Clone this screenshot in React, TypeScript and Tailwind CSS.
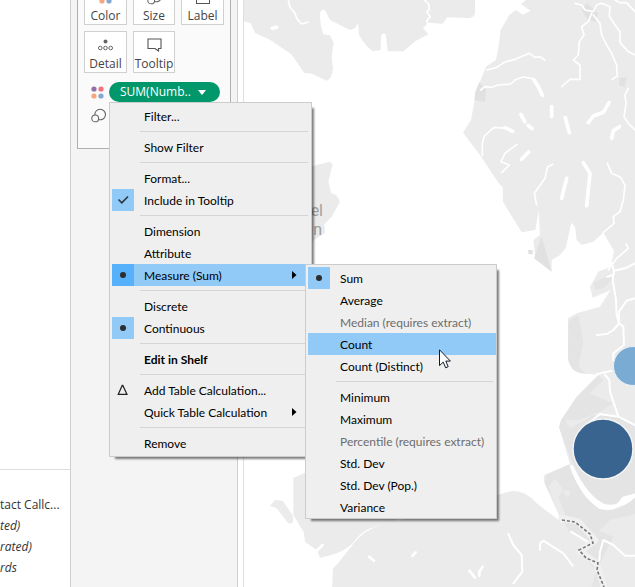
import type { ReactNode } from "react";

type Mark = "check" | "dot" | "delta";

type Entry = {
  label: string;
  mark?: Mark;
  bold?: boolean;
  disabled?: boolean;
  active?: boolean;
  submenu?: ReactNode;
  arrow?: boolean;
};

function MarkIcon({ mark }: { mark: Mark }) {
  if (mark === "check") {
    return (
      <svg viewBox="0 0 22 22" className="size-[22px]" fill="none" stroke="#2b3640" strokeWidth="1.6">
        <path d="M6.5 10.5 L9.8 13.8 L16 7.5" />
      </svg>
    );
  }
  if (mark === "dot") {
    return (
      <svg viewBox="0 0 22 22" className="size-[22px]">
        <circle cx="11" cy="11" r="3" fill="#2d2d2d" />
      </svg>
    );
  }
  return (
    <svg viewBox="0 0 22 22" className="size-[22px]" fill="none" stroke="#222" strokeWidth="1.2">
      <path d="M6.2 15.4 L10.2 6.4 H10.8 L15 15.4 Z" />
    </svg>
  );
}

function MenuItem({ label, mark, bold, disabled, active, submenu, arrow }: Entry) {
  const markBg = !mark || mark === "delta" ? "" : active && arrow ? "bg-[#56b0fa]" : "bg-[#91c9f7]";
  return (
    <li role="none" className="relative">
      <button
        type="button"
        role="menuitem"
        disabled={disabled}
        className={`flex h-[22px] w-full items-center gap-[10px] pr-3 text-left whitespace-nowrap ${
          active ? "bg-[#91c9f7]" : ""
        } ${disabled ? "text-[#6d6d6d]" : "text-black"} ${bold ? "font-bold" : ""}`}
      >
        <span className={`size-[22px] shrink-0 ${markBg}`}>{mark && <MarkIcon mark={mark} />}</span>
        <span className="flex-1 pt-[2px]">{label}</span>
        {arrow && (
          <svg viewBox="0 0 5 8" className="mr-[2px] h-2 w-[5px]">
            <path d="M0 0 L4.5 4 L0 8 Z" fill="#000" />
          </svg>
        )}
      </button>
      {submenu}
    </li>
  );
}

function Menu({ groups, className, label }: { groups: Entry[][]; className: string; label: string }) {
  return (
    <ul
      role="menu"
      aria-label={label}
      className={`absolute border border-[#cccccc] bg-[#efefef] pt-[2px] pl-[2px] font-[Lato,sans-serif] text-[12px] leading-5 shadow-[4px_4px_2px_-2px_rgba(0,0,0,0.5)] ${className}`}
    >
      {groups.map((group, i) => (
        <li key={i} role="none">
          {i > 0 && <hr className="my-1 mr-[3px] ml-7 border-[#d5d5d5]" />}
          <ul role="group">
            {group.map((entry) => (
              <MenuItem key={entry.label} {...entry} />
            ))}
          </ul>
        </li>
      ))}
    </ul>
  );
}

const measureGroups: Entry[][] = [
  [
    { label: "Sum", mark: "dot" },
    { label: "Average" },
    { label: "Median (requires extract)", disabled: true },
    { label: "Count", active: true },
    { label: "Count (Distinct)" },
  ],
  [
    { label: "Minimum" },
    { label: "Maximum" },
    { label: "Percentile (requires extract)", disabled: true },
    { label: "Std. Dev" },
    { label: "Std. Dev (Pop.)" },
    { label: "Variance" },
  ],
];

const Cursor = () => (
  <svg viewBox="0 0 12 20" className="pointer-events-none absolute top-[85px] left-[134px] h-5 w-3">
    <path
      d="M0.5 0.8 V16.6 L4.2 13.1 L6.7 18.8 L9.2 17.7 L6.8 12.1 H11.4 Z"
      fill="#fff"
      stroke="#111827"
      strokeWidth="1"
    />
  </svg>
);

const pillGroups: Entry[][] = [
  [{ label: "Filter..." }],
  [{ label: "Show Filter" }],
  [{ label: "Format..." }, { label: "Include in Tooltip", mark: "check" }],
  [
    { label: "Dimension" },
    { label: "Attribute" },
    {
      label: "Measure (Sum)",
      mark: "dot",
      active: true,
      arrow: true,
      submenu: (
        <div className="absolute top-0 left-[193px]">
          <Menu groups={measureGroups} label="Measure" className="top-0 left-0 w-48" />
          <Cursor />
        </div>
      ),
    },
  ],
  [{ label: "Discrete" }, { label: "Continuous", mark: "dot" }],
  [{ label: "Edit in Shelf", bold: true }],
  [{ label: "Add Table Calculation...", mark: "delta" }, { label: "Quick Table Calculation", arrow: true }],
  [{ label: "Remove" }],
];

const Dots = ({ className }: { className: string }) => (
  <svg viewBox="0 0 13 13" className={className}>
    <circle cx="3" cy="3" r="2.6" fill="#8d72a3" />
    <circle cx="10" cy="3" r="2.6" fill="#f5707c" />
    <circle cx="3" cy="10" r="2.6" fill="#f5a67c" />
    <circle cx="10" cy="10" r="2.6" fill="#85a8d0" />
  </svg>
);

const Rings = ({ className }: { className: string }) => (
  <svg viewBox="0 0 15 15" className={className} fill="none" stroke="#666" strokeWidth="1.1">
    <path d="M3.9 7.2 A5.3 5.3 0 1 1 7.7 11.6" />
    <circle cx="4.2" cy="10.4" r="3.4" />
  </svg>
);

const LabelIcon = () => (
  <svg viewBox="0 0 14 14" className="size-[14px]" fill="none" stroke="#555">
    <rect x="0.5" y="0.5" width="13" height="13" />
  </svg>
);

const DetailIcon = () => (
  <svg viewBox="0 0 15 12" className="h-3 w-[15px]" fill="none" stroke="#666">
    <circle cx="7.5" cy="2.5" r="2" fill="#666" stroke="none" />
    <circle cx="2.3" cy="9" r="1.8" />
    <circle cx="7.5" cy="9" r="1.8" />
    <circle cx="12.7" cy="9" r="1.8" />
  </svg>
);

const TooltipIcon = () => (
  <svg viewBox="0 0 15 14" className="h-[14px] w-[15px]" fill="none" stroke="#555" strokeWidth="1.1">
    <path d="M1 1 H14 V10.5 H11.5 V13 L8 10.5 H1 Z" />
  </svg>
);

function MarkButton({ label, icon }: { label: string; icon: ReactNode }) {
  return (
    <button
      type="button"
      className="flex h-[42px] flex-col items-center justify-end border border-[#d0d0d0] bg-white text-[#444]"
    >
      <span className="flex h-5 items-center">{icon}</span>
      <span className="h-[17px] leading-[18px]">{label}</span>
    </button>
  );
}

function Map() {
  return (
    <svg
      viewBox="244 0 391 587"
      preserveAspectRatio="xMinYMin slice"
      className="block h-full w-full"
      role="img"
      aria-label="Map"
    >
      <g transform="translate(240 0) scale(0.33333)" fill="#ebebeb">
        <path d="M12 0 H705 V42 Q700 54 685 54 L622 52 L608 71 L566 68 L549 84 L565 103 L527 123 L490 154 H443 L438 105 Q430 95 423 108 L422 150 L400 154 Q380 145 356 103 L355 69 L345 85 L330 90 L270 60 L256 32 Q247 24 240 38 Q238 70 250 103 L270 106 L281 128 L275 170 L279 205 Q276 238 260 242 L215 221 L193 219 L154 163 L90 119 L45 99 L32 70 L12 64 Z" />
        <path d="M857 0 L843 13 L872 32 L849 44 L827 30 L808 45 L782 90 L774 150 L768 180 L738 200 L710 270 L693 360 L669 398 L720 465 L776 550 L788 562 L789 605 L845 697 L886 690 L896 632 L900 705 L880 720 L886 775 L935 815 V780 L960 765 L977 745 L994 668 L1005 680 L1010 720 L1025 735 L1060 725 L1090 698 L1122 753 L1113 800 L1075 815 L1050 860 L1058 893 L1112 870 L1085 912 L1080 920 L1010 940 L984 955 V1080 L1000 1110 L1030 1120 L1075 1125 L1000 1215 L957 1280 L990 1392 L914 1424 Q905 1440 925 1475 L968 1570 L890 1510 Q850 1465 805 1475 L770 1486 L420 1576 Q370 1590 335 1638 L290 1695 L279 1705 L276 1770 H1190 V0 Z" />
        <path d="M160 1434 L195 1418 H470 V1574 Q385 1570 350 1615 Q320 1660 240 1673 L230 1650 L195 1625 L192 1598 L160 1545 Z" />
        <path d="M105 1500 L128 1502 L157 1544 Q166 1575 145 1570 L110 1525 L90 1518 Z" />
        <path d="M210 500 L270 485 L278 493 L265 545 L274 580 L289 585 L300 606 L275 650 L253 673 L255 698 L210 728 Z" />
        <path d="M470 1500 H750 V1530 H470 Z" />
      </g>

      <g transform="translate(240 0) scale(0.33333)" fill="#e1e1e1">
        <path d="M718 246 L738 268 L735 306 L703 300 L706 275 Z M905 710 L935 815 L882 775 Z M1138 235 L1160 230 L1154 262 L1137 255 Z M1040 10 L1075 38 L1068 65 L1042 58 L1025 30 Z" />
        <path d="M864 750 H878 V763 H866 Z" fill="#dfe2e2" />
      </g>

      <g transform="translate(490 260) scale(0.33333)" fill="#e4e4e4">
        <path d="M235 190 L238 182 L265 165 L280 245 L265 320 L288 342 Q235 340 234 285 Z" />
        <path d="M310 68 L370 42 L378 48 L340 85 L315 90 Z" />
        <path d="M325 345 L260 410 L213 480 L207 502 L240 590 L290 700 L330 740 H435 V500 L380 470 L310 465 L285 480 L240 505 L225 480 L265 480 L330 455 L370 430 L300 400 L340 360 Z" />
        <path d="M170 645 L235 615 L255 640 L285 710 L350 752 L435 735 V762 L360 780 L310 830 L240 820 L165 670 Z" />
        <path d="M240 805 L310 850 L270 880 L330 910 L370 830 L335 815 L280 795 Z M290 905 L320 930 L305 981 H345 L325 910 Z" />
        <path d="M195 655 L220 690 L205 710 L232 780 L215 785 L175 680 Z M225 690 L242 695 L235 712 L218 700 Z" fill="#ebebeb" />
      </g>

      <g
        transform="translate(240 0) scale(0.33333)"
        fill="none"
        stroke="#fff"
        strokeWidth="5"
        strokeLinejoin="round"
        strokeLinecap="round"
      >
        <path d="M145 0 L150 22 L165 40 L170 55 L185 72 L205 66 M553 0 L566 12 L568 30 L560 35 L571 50 L560 63 L565 72" />
        <path d="M740 210 L770 202 L795 186 L825 178 L868 160 L885 172 L900 170 L915 181" />
        <path d="M722 270 L735 260 L755 262 L775 255 L812 252 L825 240 L848 231 L878 236" />
        <path d="M1005 10 L1025 15 L1035 30 L1060 35 L1070 15 L1085 10 L1110 20 L1108 48 L1125 75 L1140 95 V128 L1165 155 L1185 165" />
        <path d="M1055 40 L1045 65 L1025 80 L1032 105 L1018 125 L1015 165 L1000 180 L1020 195 V238 L990 238 L965 260" />
        <path d="M1060 45 L1080 70 L1085 105 L1100 135 L1115 160 L1130 195 L1132 228 L1116 238 M1125 0 L1140 8 L1160 8 L1185 35" />
        <path d="M1165 265 L1155 285 L1158 310 L1152 350 L1165 370 L1185 390" />
        <path d="M727 468 V430 L733 408 L762 382 L795 385 M831 433 L795 460 L783 485 L808 495 L785 518" />
        <path d="M939 493 L923 500 L915 535 L890 570 L883 580 L890 615" />
        <path d="M1102 490 L1115 520 L1142 532 L1155 555 L1150 600 L1140 635 L1120 650 L1122 670 L1090 698" />
        <path d="M1158 732 L1165 745 L1130 775 L1105 810" />
        <g strokeWidth="11">
          <path d="M882 240 L895 260 L907 286 M935 320 L935 350 M843 343 L854 365 M864 376 L876 386 M976 353 L988 398 M1107 308 L1090 337 L1060 348 L1045 368 M1138 380 L1120 392 L1115 415 M866 456 L845 478 M980 535 L965 595 M1030 488 L1050 520 L1040 617 M795 383 L818 394 M97 85 L110 82" />
        </g>
      </g>

      <g
        transform="translate(490 260) scale(0.33333)"
        fill="none"
        stroke="#fff"
        strokeWidth="6"
        strokeLinejoin="round"
        strokeLinecap="round"
      >
        <path d="M365 10 L372 32 L368 60 L378 120 L380 165 L387 190 L370 210 L350 222 L320 225 M387 190 L400 200 L402 255 L370 280 V300 M387 190 V155 L410 122 L435 115 M372 32 L405 25 L435 10 M352 50 L372 45" />
        <path d="M320 343 L365 332 M345 345 L358 360 L360 395 L375 440 L385 470 L435 495 M385 470 L330 462 L295 490" />
        <path d="M245 620 Q275 705 330 742 Q380 755 400 715 L435 705 Q400 745 345 738 Q290 715 245 620 Z" fill="#fff" strokeWidth="10" />
        <path d="M55 822 L70 855 L95 885 L97 935 L70 970 M150 870 L150 850 L160 842 L220 880 L248 917 M243 815 L300 850 M435 887 H405 L370 855 L340 840 L330 875 L328 900" />
        <path d="M215 775 L265 785 L315 840 L270 875 L320 910 L342 981" stroke="#f0f0f0" strokeWidth="20" />
      </g>
      <path
        d="M562 520 L575 522 L590 534 L593 543 L579 550 L586 558 L598 563 L597 570 L604 587"
        fill="none"
        stroke="#777"
        strokeWidth="1.6"
        strokeDasharray="3 2"
      />
      <g transform="translate(240 450) scale(0.33333)" fill="none" stroke="#fff" strokeWidth="8" strokeLinecap="round">
        <path d="M388 320 L402 332 M517 318 L527 307 M688 362 L705 383 M718 378 V365 L728 350 M248 285 L230 302 M285 332 L310 310" />
      </g>

      <circle cx="633" cy="366" r="19.5" fill="#7aabd3" stroke="#e9eff5" />
      <circle cx="603" cy="449" r="30" fill="#38648f" stroke="#f4f4f4" strokeWidth="1.5" />

      <g fontFamily="Roboto, sans-serif" fontSize="16" fill="#a0a0a0" textAnchor="end">
        <text x="323" y="216">el</text>
        <text x="322" y="235">n</text>
      </g>
    </svg>
  );
}

export default function App() {
  return (
    <div className="flex h-screen overflow-hidden bg-white font-['Open_Sans',sans-serif] text-[12px] text-[#333]">
      <aside className="flex w-[71px] shrink-0 flex-col overflow-hidden border-r border-[#cfcfcf]">
        <div className="h-[470px] shrink-0 border-b border-[#dedede]" />
        <ul className="pt-6 leading-[21px] whitespace-nowrap">
          <li>tact Callc...</li>
          <li className="italic">ted)</li>
          <li className="italic">rated)</li>
          <li className="italic">rds</li>
        </ul>
      </aside>

      <section className="relative z-10 w-[167px] shrink-0 border-r border-[#cfcfcf] bg-[#f4f4f4] px-[6px]">
        <div className="flex h-[149px] flex-col border border-t-0 border-[#b0b0b0] bg-[#fafafa] px-[6px]">
          <div className="-mt-[17px] grid grid-cols-[43px_42px_43px] gap-[6px]">
            <MarkButton label="Color" icon={<Dots className="size-[13px]" />} />
            <MarkButton label="Size" icon={<Rings className="size-[15px]" />} />
            <MarkButton label="Label" icon={<LabelIcon />} />
            <MarkButton label="Detail" icon={<DetailIcon />} />
            <MarkButton label="Tooltip" icon={<TooltipIcon />} />
          </div>
          <div className="mt-[9px] flex items-center gap-[5px] pl-[7px]">
            <Dots className="size-[13px] shrink-0" />
            <div className="relative">
              <button
                type="button"
                className="flex h-5 w-[111px] items-center gap-[7px] rounded-full bg-[#00986a] pl-[11px] text-white"
              >
                <span className="font-medium whitespace-nowrap">SUM(Numb..</span>
                <svg viewBox="0 0 8 5" className="h-[5px] w-2">
                  <path d="M0 0 H8 L4 5 Z" fill="#fff" />
                </svg>
              </button>
              <Menu groups={pillGroups} label="Pill menu" className="top-full left-0 w-[203px] pb-[2px]" />
            </div>
          </div>
          <Rings className="mt-[6px] ml-[7px] size-[15px]" />
        </div>
      </section>

      <main className="ml-[5px] min-w-0 flex-1 border-l border-[#dedede]">
        <Map />
      </main>
    </div>
  );
}
